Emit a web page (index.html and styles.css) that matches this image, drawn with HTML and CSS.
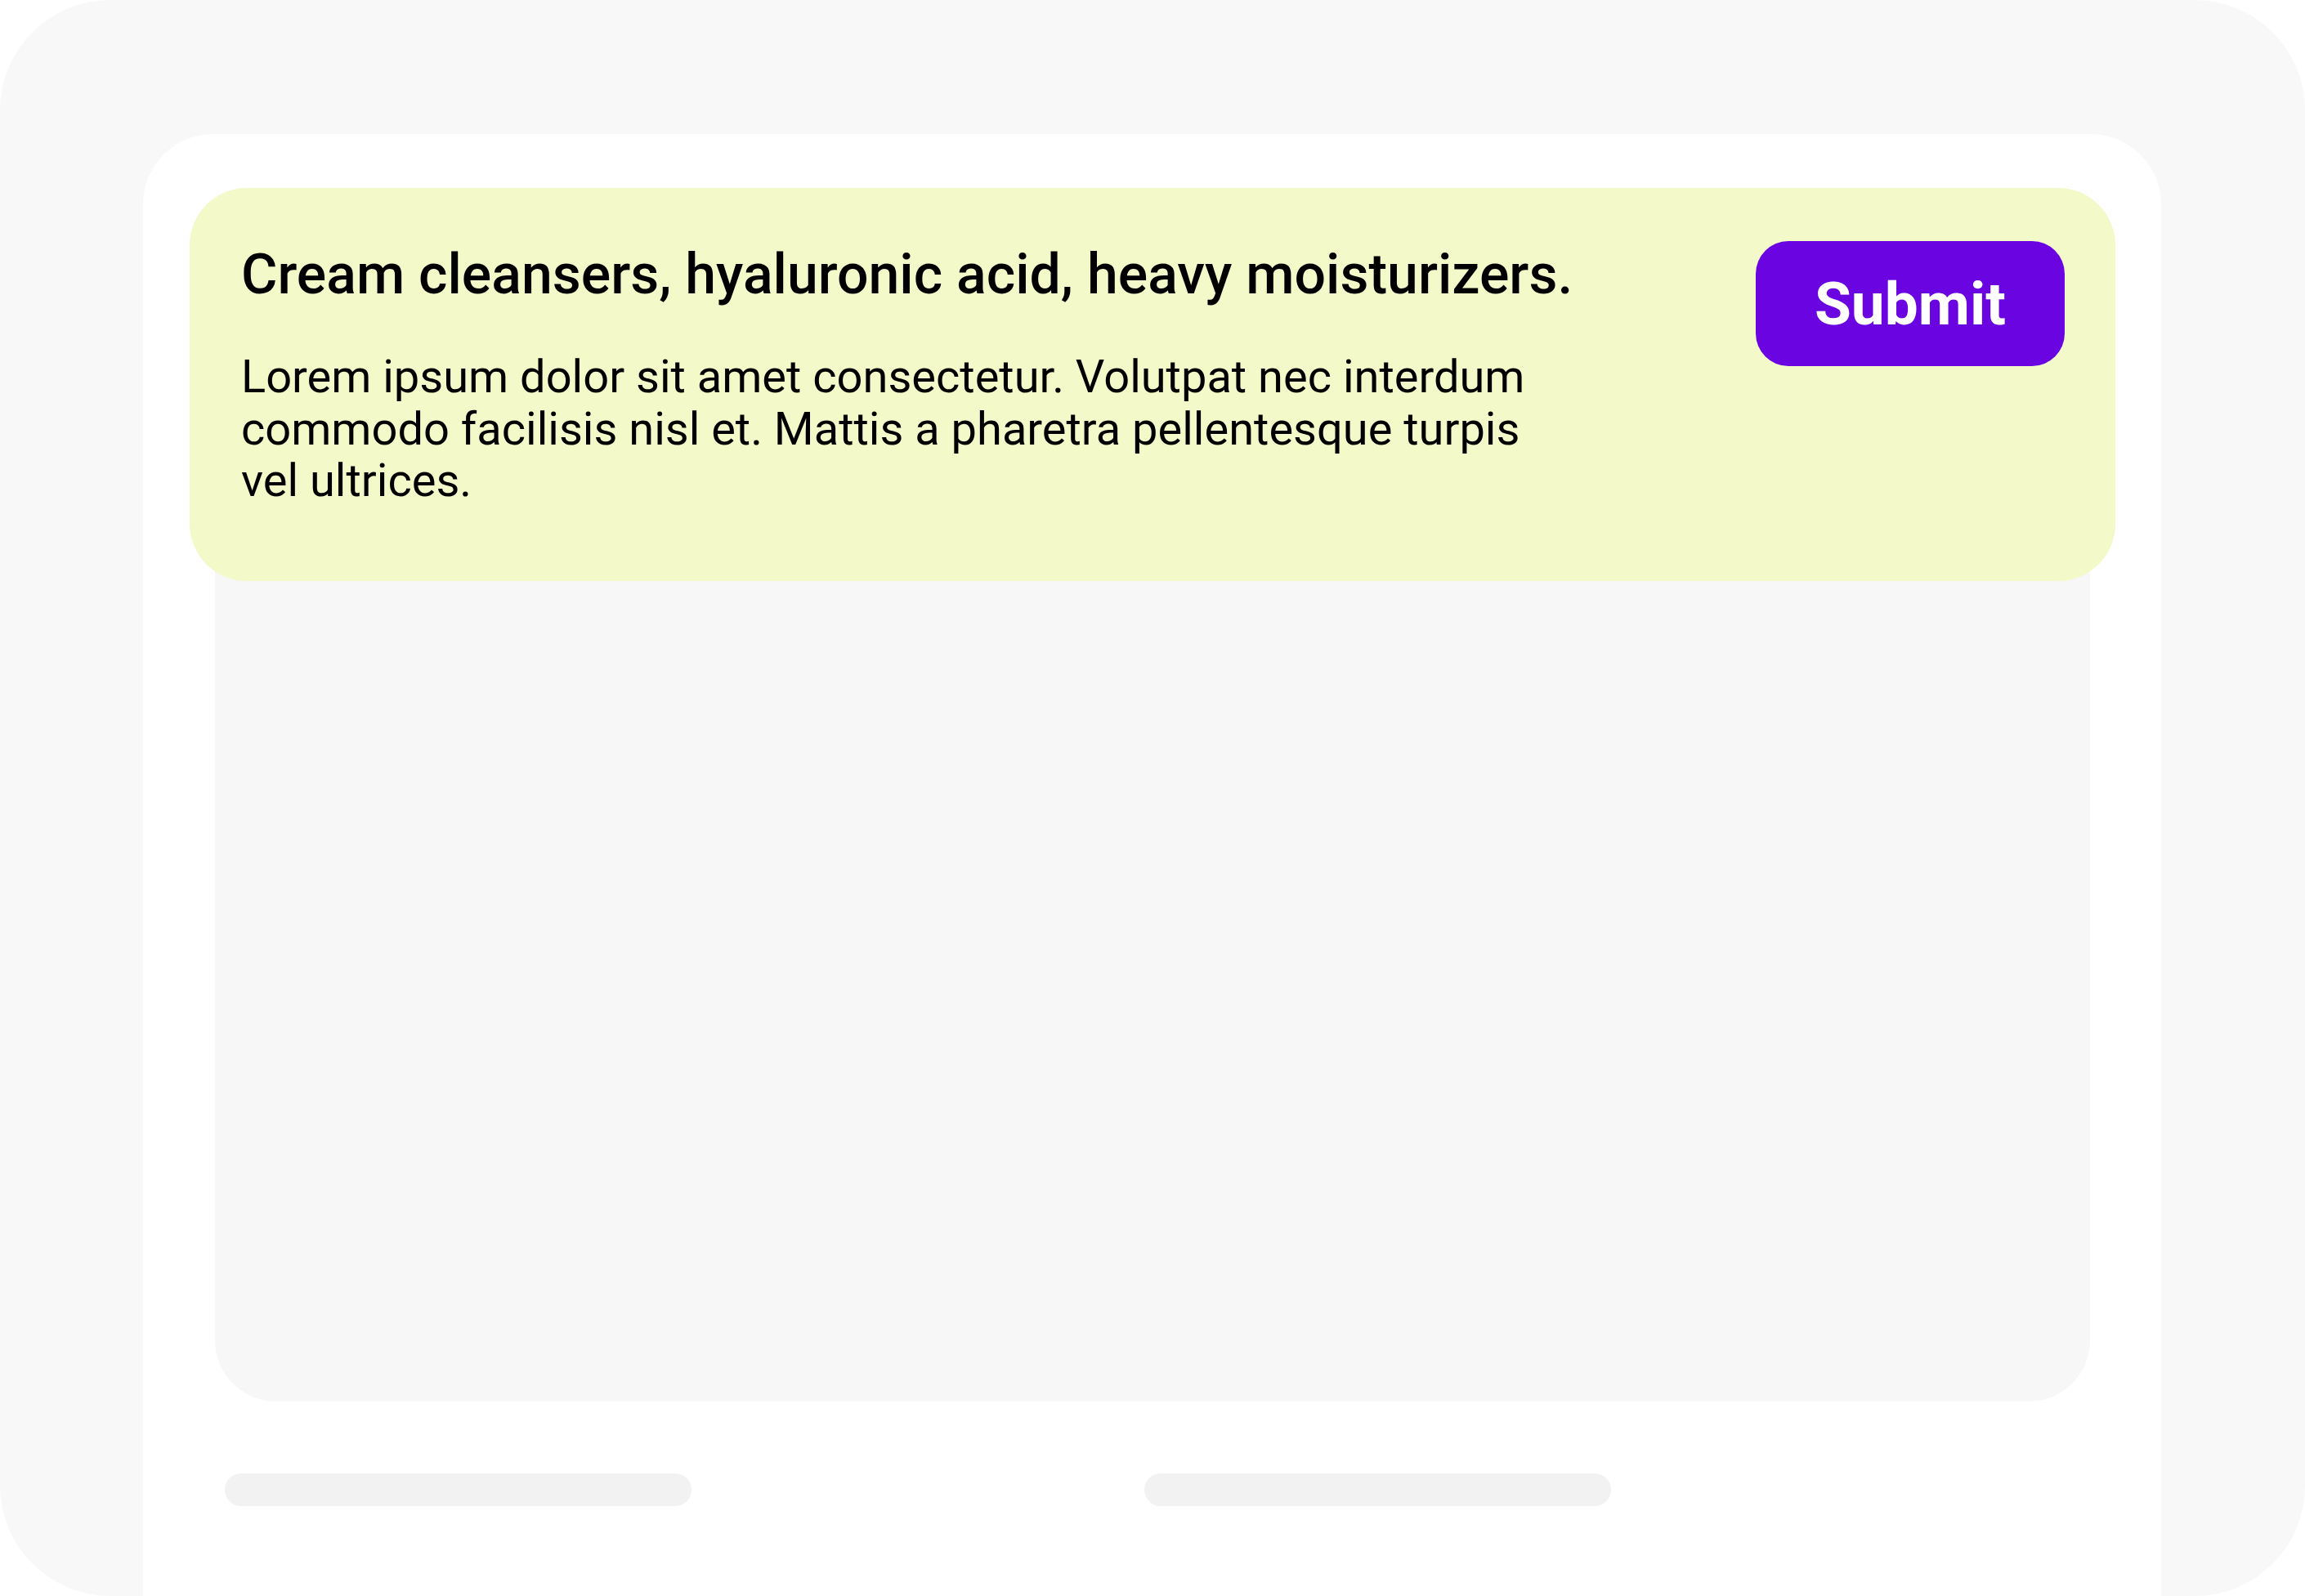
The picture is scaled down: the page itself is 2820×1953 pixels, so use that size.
FILE: index.html
```html
<!DOCTYPE html>
<html lang="en">
<head>
<meta charset="utf-8">
<title>Card</title>
<link rel="stylesheet" href="styles.css">
</head>
<body>
<div class="frame">
  <div class="panel">
    <div class="media"></div>
    <div class="bars">
      <div class="bar"></div>
      <div class="bar"></div>
    </div>
    <div class="card">
      <div class="card-text">
        <h1 class="card-title">Cream cleansers, hyaluronic acid, heavy moisturizers.</h1>
        <p class="card-body">Lorem ipsum dolor sit amet consectetur. Volutpat nec interdum commodo facilisis nisl et. Mattis a pharetra pellentesque turpis vel ultrices.</p>
      </div>
      <button class="submit" type="button">Submit</button>
    </div>
  </div>
</div>
</body>
</html>
```

FILE: styles.css
```css
* { box-sizing: border-box; }

html, body {
  margin: 0;
  padding: 0;
  background: #ffffff;
}

body {
  font-family: Roboto, "Liberation Sans", Arial, sans-serif;
  color: #000;
}

.frame {
  width: 2820px;
  height: 1953px;
  background: #f8f8f8;
  border-radius: 135px;
  padding: 164px 176px 0 175px;
  overflow: hidden;
}

.panel {
  position: relative;
  height: 100%;
  background: #ffffff;
  border-radius: 86px 86px 0 0;
  padding: 86px 87px 0 88px;
}

.media {
  height: 1465px;
  background: #f7f7f7;
  border-radius: 75px;
}

.bars {
  display: flex;
  gap: 554px;
  margin-top: 88px;
  padding-left: 12px;
}

.bar {
  width: 571px;
  height: 40px;
  border-radius: 20px;
  background: #f2f2f2;
}

.card {
  position: absolute;
  left: 57px;
  top: 66px;
  width: 2356px;
  height: 481px;
  background: #f3f9c9;
  border-radius: 70px;
  padding: 65px 62px 0 63px;
  display: flex;
  justify-content: space-between;
  align-items: flex-start;
}

.card-title {
  margin: 0;
  font-size: 68px;
  font-weight: 500;
  line-height: 82px;
  letter-spacing: 0;
}

.card-body {
  margin: 53px 0 0;
  max-width: 1600px;
  font-size: 56px;
  font-weight: 400;
  line-height: 63.5px;
}

.submit {
  flex: none;
  width: 378px;
  height: 153px;
  border: none;
  border-radius: 40px;
  background: #6a04e0;
  color: #ffffff;
  font-family: Roboto, "Liberation Sans", Arial, sans-serif;
  font-size: 73px;
  font-weight: 700;
  display: flex;
  align-items: center;
  justify-content: center;
  padding: 0;
}
```
